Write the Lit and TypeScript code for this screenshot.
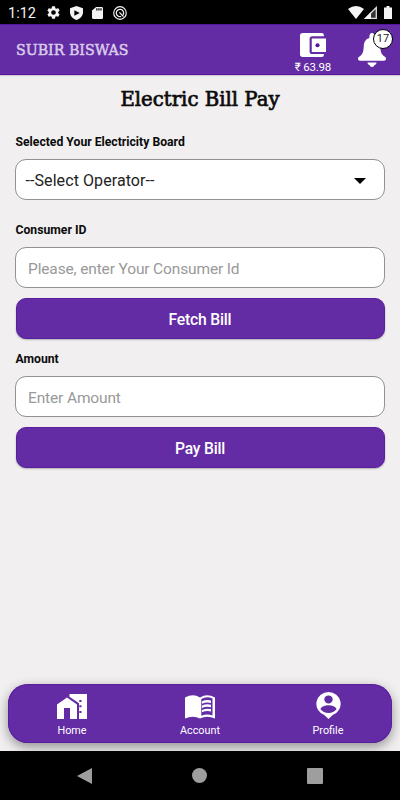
import { LitElement, html, css, svg } from "lit";
import { customElement } from "lit/decorators.js";

const icon = (vb: string, w: number, h: number, body: unknown) =>
  html`<svg viewBox=${vb} width=${w} height=${h} fill="currentColor" preserveAspectRatio="none">${body}</svg>`;

const gear = svg`<path d="M19.14 12.94c.04-.3.06-.61.06-.94s-.02-.64-.07-.94l2.03-1.58a.49.49 0 0 0 .12-.61l-1.92-3.32a.49.49 0 0 0-.59-.22l-2.39.96a7 7 0 0 0-1.62-.94l-.36-2.54a.48.48 0 0 0-.48-.41h-3.84a.48.48 0 0 0-.47.41l-.36 2.54c-.59.24-1.13.57-1.62.94l-2.39-.96a.49.49 0 0 0-.59.22L2.74 8.87a.48.48 0 0 0 .12.61l2.03 1.58c-.05.3-.09.63-.09.94s.02.64.07.94l-2.03 1.58a.49.49 0 0 0-.12.61l1.92 3.32c.12.22.37.29.59.22l2.39-.96c.5.38 1.03.7 1.62.94l.36 2.54c.05.24.24.41.48.41h3.84c.24 0 .44-.17.47-.41l.36-2.54a7 7 0 0 0 1.62-.94l2.39.96c.22.08.47 0 .59-.22l1.92-3.32a.48.48 0 0 0-.12-.61zM12 15.6A3.6 3.6 0 1 1 12 8.4a3.6 3.6 0 0 1 0 7.2z"/>`;
const shield = svg`<path fill-rule="evenodd" d="M12 1 3 4.5V11c0 5.6 3.8 10.7 9 12 5.200-1.300 9-6.400 9-12V4.500zM9 7.500l7.500 4.500L9 16.500z"/>`;
const card = svg`<path fill-rule="evenodd" d="M18 2h-8L4 8v12a2 2 0 0 0 2 2h12a2 2 0 0 0 2-2V4a2 2 0 0 0-2-2zm-6 6h-1.800V4H12zm3 0h-1.800V4H15zm3 0h-1.800V4H18z"/>`;
const radar = svg`<g fill="none" stroke="currentColor"><circle cx="12" cy="12" r="10.800" stroke-width="2"/><path d="M17.500 15A6.300 6.300 0 1 0 14 18M11 11l7 7" stroke-width="2.200"/></g>`;
const wallet = svg`<path fill-rule="evenodd" d="M20.500 18.800v.500a1.700 1.700 0 0 1-1.700 1.700H5a2 2 0 0 1-2-2V5a2 2 0 0 1 2-2h13.800a1.700 1.700 0 0 1 1.700 1.700v.800H12A2 2 0 0 0 10 7.500v9.300a2 2 0 0 0 2 2zM11.600 17.200H22V7.200H11.600z"/><path fill="#632ca4" d="M12.800 8.400h7.700v7.600h-7.700z" opacity="0"/><circle cx="15.800" cy="12.200" r="1.500" fill="#54149c"/>`;
const bell = svg`<path d="M11.500 5C11 1.500 12.500 0 14 0s3 1.500 2.500 5c4 1 5.500 4 5.700 8 .300 6 1.300 8.500 4.300 10.500 1 .700 1.500 1.300 1.500 2.300 0 1.500-1.200 2-3 2H3c-1.800 0-3-.500-3-2 0-1 .500-1.600 1.500-2.300 3-2 4-4.500 4.300-10.500.200-4 1.700-7 5.700-8zM9.500 29.500h9c0 1.600-1 2.200-2 2.600-.400 1.200-1.300 1.900-2.500 1.900s-2.100-.700-2.500-1.900c-1-.400-2-1-2-2.600z"/>`;
const home = svg`<path d="M0 25V10.500L10 3.500l10 7V25h-7V14H7v11z"/><path fill-rule="evenodd" d="M12.500 0H30v25h-8V9.300L12.500 2.800zM22.300 6v2h2.200V6zm0 5.300v2h2.200v-2zm0 5.700v2h2.200v-2z"/>`;
const book = svg`<path d="M0 2.600Q8-2 15 2.500 22-2 30 2.600V23.500Q22 20 15 23.500 8 20 0 23.500z"/><path fill="#632ca4" d="M16.300 4Q22 .800 27.500 3.600V20.500Q22 18.200 16.300 20.700z"/><path d="M17 6.300q4.500-2 9-.800v2.400q-4.500-1.200-9 .800zm0 4.300q4.500-2 9-.800v2.400q-4.500-1.200-9 .800zm0 4.300q4.500-2 9-.800v2.400q-4.500-1.200-9 .800z"/>`;
const profile = svg`<path fill-rule="evenodd" d="M12.500 0a12.300 12.300 0 0 0-4.200 23.800l4.200 4.200 4.200-4.200A12.300 12.300 0 0 0 12.500 0zm0 3.500a4.200 4.200 0 1 1 0 8.400 4.200 4.200 0 0 1 0-8.400zm0 18.200c-3.300 0-6.200-1.500-8-3.900.200-2.500 5.300-4 8-4s7.800 1.500 8 4c-1.800 2.400-4.700 3.900-8 3.900z"/>`;

@customElement("app-root")
export class AppRoot extends LitElement {
  static styles = css`
    :host { display: flex; flex-direction: column; width: 400px; height: 800px; background: #f1eff0; color: #0b0b0b; font-family: Roboto, "Liberation Sans", sans-serif; overflow: hidden; }
    * { box-sizing: border-box; }
    svg { display: block; flex: none; }
    .status { flex: none; height: 24px; background: #000; color: #f4f4f4; display: flex; align-items: center; padding: 1px 8px 0 8px; }
    .clock { font-size: 14.5px; width: 39px; white-space: nowrap; padding-top: 1px; }
    .notes { display: flex; gap: 9.500px; flex: 1; align-items: center; }
    .signals { display: flex; align-items: center; }
    .signals .cell { margin-right: 7px; }
    header { flex: none; height: 51px; background: #632ca4; border-top: 1px solid #54149c; border-bottom: 1px solid #54149c; box-shadow: 0 1px 1px #0002; display: flex; color: #fff; padding-left: 16px; z-index: 1; }
    .name { flex: 1; font: 400 14.200px/50px "DejaVu Serif", serif; -webkit-text-stroke: .5px; color: #d9cbea; white-space: nowrap; }
    .wallet { width: 50px; display: flex; flex-direction: column; align-items: center; padding-top: 8px; margin-right: 20px; }
    .balance { font-size: 11.500px; letter-spacing: -.2px; line-height: 14px; margin-top: 3px; white-space: nowrap; }
    .bell { position: relative; width: 42px; padding-top: 8px; }
    .badge { position: absolute; left: 15px; top: 4px; width: 20px; height: 20px; border: 1px solid #000; border-radius: 50%; background: #fff; color: #222; font-size: 11px; line-height: 18px; text-align: center; }
    main { flex: 1; display: flex; flex-direction: column; padding: 10px 15px 8px; min-height: 0; }
    h1 { font: 400 19.700px/30px "DejaVu Serif", serif; -webkit-text-stroke: .7px; text-align: center; margin: 0 0 19px; white-space: nowrap; }
    label { font-size: 12.200px; font-weight: 700; line-height: 16px; height: 16px; padding-left: .5px; margin-bottom: 9px; }
    .field { flex: none; height: 41px; border: 1px solid #929292; border-radius: 11px; background: #fff; display: flex; align-items: center; padding: 2px 18px 0 12px; font-size: 15.500px; letter-spacing: -.14px; color: #999; margin-bottom: 10px; }
    .select { color: #222; padding-left: 9.500px; font-size: 16px; letter-spacing: .08px; justify-content: space-between; margin-bottom: 22px; }
    button { flex: none; height: 41px; margin: 0 .5px 12px; border: 1px solid #5a1fa0; border-radius: 10px; background: #632ca4; color: #fff; font: 500 15.700px/39px Roboto, sans-serif; letter-spacing: -.2px; padding: 1px 0 0; box-shadow: 0 1px 2px #0004; }
    nav { flex: none; height: 59px; margin: auto -7px 0 -7px; border-radius: 20px; background: #632ca4; color: #fff; display: grid; grid-template-columns: repeat(3, 1fr); box-shadow: inset 0 0 0 1px #5a1fa0, 0 4px 12px #0006; }
    .tab { display: flex; flex-direction: column; align-items: center; font-size: 10.800px; line-height: 15px; }
    .glyph { height: 39px; display: flex; align-items: flex-end; padding-bottom: 4px; }
    .system { flex: none; height: 49px; background: #000; color: #9e9e9e; display: flex; justify-content: center; align-items: center; gap: 100px; padding-right: 1px; z-index: 1; }
  `;

  render() {
    return html`
      <div class="status">
        <span class="clock">1:12</span>
        <div class="notes">
          ${icon("2 2 20 20", 13, 13, gear)}
          ${icon("3 1 18 22", 13, 14, shield)}
          ${icon("4 2 16 20", 11, 12, card)}
          ${icon("0 0 24 24", 14, 14, radar)}
        </div>
        <div class="signals">
          ${icon("0 0 16 13", 16, 13, svg`<path d="M0 3Q8-3 16 3L8 13z"/>`)}
          <span class="cell">${icon("0 0 13 13", 13, 13, svg`<path fill="#333" d="M12 1v11H7V6z"/><path fill="none" stroke="#ddd" stroke-width="1.300" d="M12.300 1.500v10.800H1.500z"/><path d="M0 13 7 6v7z"/>`)}</span>
          ${icon("0 0 8 13", 8, 13, svg`<path d="M2.500 0h3v1.500H8V13H0V1.500h2.500z"/>`)}
        </div>
      </div>
      <header>
        <span class="name">SUBIR BISWAS</span>
        <div class="wallet">
          ${icon("3 3 19 18", 26, 24, wallet)}
          <span class="balance">₹ 63.98</span>
        </div>
        <div class="bell">${icon("0 0 28 34", 28, 34, bell)}<span class="badge">17</span></div>
      </header>
      <main>
        <h1>Electric Bill Pay</h1>
        <label>Selected Your Electricity Board</label>
        <div class="field select"><span>--Select Operator--</span>${icon("0 0 12 6", 12, 6, svg`<path fill="#000" d="M0 0h12L6 6z"/>`)}</div>
        <label>Consumer ID</label>
        <div class="field">Please, enter Your Consumer Id</div>
        <button>Fetch Bill</button>
        <label>Amount</label>
        <div class="field">Enter Amount</div>
        <button>Pay Bill</button>
        <nav>
          <div class="tab"><span class="glyph">${icon("0 0 30 25", 30, 25, home)}</span>Home</div>
          <div class="tab"><span class="glyph">${icon("0 0 30 24", 30, 24, book)}</span>Account</div>
          <div class="tab"><span class="glyph">${icon("0 0 25 28", 25, 27, profile)}</span>Profile</div>
        </nav>
      </main>
      <div class="system">
        ${icon("0 0 15 16", 15, 16, svg`<path d="M15 0v16L0 8z"/>`)}
        ${icon("0 0 15 15", 15, 15, svg`<circle cx="7.500" cy="7.500" r="7.500"/>`)}
        ${icon("0 0 16 16", 16, 16, svg`<rect width="16" height="16" rx="1"/>`)}
      </div>
    `;
  }
}
